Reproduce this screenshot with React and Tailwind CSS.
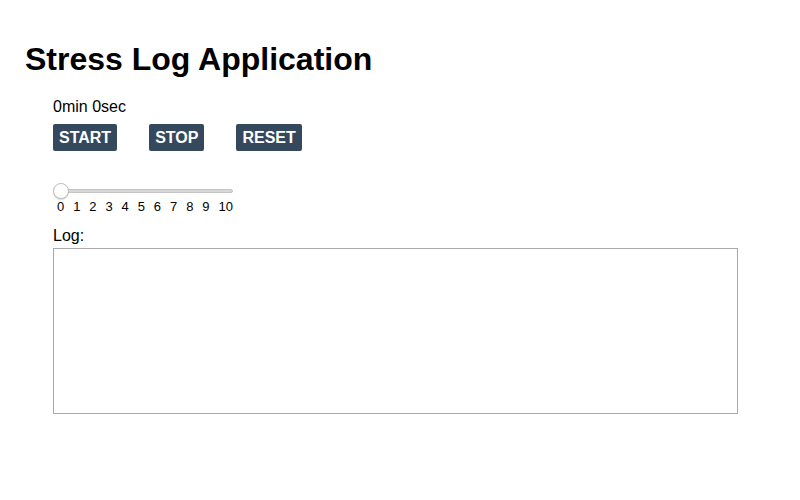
export default function App() {
  const ticks = [0, 1, 2, 3, 4, 5, 6, 7, 8, 9, 10];
  return (
    <div className="min-h-screen bg-white text-black px-[25px] pt-[41px]" style={{ fontFamily: '"Liberation Sans", Arial, sans-serif' }}>
      <h1 className="text-[32px] font-bold leading-[37px]">Stress Log Application</h1>
      <div className="pl-[28px] mt-[20px]">
        <div className="text-[16px] leading-[18px]">0min 0sec</div>
        <div className="flex gap-[32px] mt-[8px]">
          <button className="bg-[#34495e] text-white font-bold text-[16px] leading-[19px] px-[6px] h-[27px] rounded-[2px]">START</button>
          <button className="bg-[#34495e] text-white font-bold text-[16px] leading-[19px] px-[6px] h-[27px] rounded-[2px]">STOP</button>
          <button className="bg-[#34495e] text-white font-bold text-[16px] leading-[19px] px-[6px] h-[27px] rounded-[2px]">RESET</button>
        </div>
        <div className="mt-[32px] w-[180px]">
          <div className="relative h-[16px] flex items-center">
            <div className="w-full h-[4px] rounded-full bg-[#d8d8d8] border border-[#c4c4c4]"></div>
            <div className="absolute left-0 top-0 w-[16px] h-[16px] rounded-full bg-white border border-[#bdbdbd] shadow-[0_1px_1px_rgba(0,0,0,0.15)]"></div>
          </div>
          <div className="flex justify-between text-[13px] leading-[15px] pl-[4px] w-[180px]">
            {ticks.map((t) => (
              <span key={t}>{t}</span>
            ))}
          </div>
        </div>
        <div className="text-[16px] leading-[18px] mt-[13px]">Log:</div>
        <textarea className="block mt-[3px] w-[685px] h-[166px] border border-[#a9a9a9] resize-none outline-none"></textarea>
      </div>
    </div>
  );
}
